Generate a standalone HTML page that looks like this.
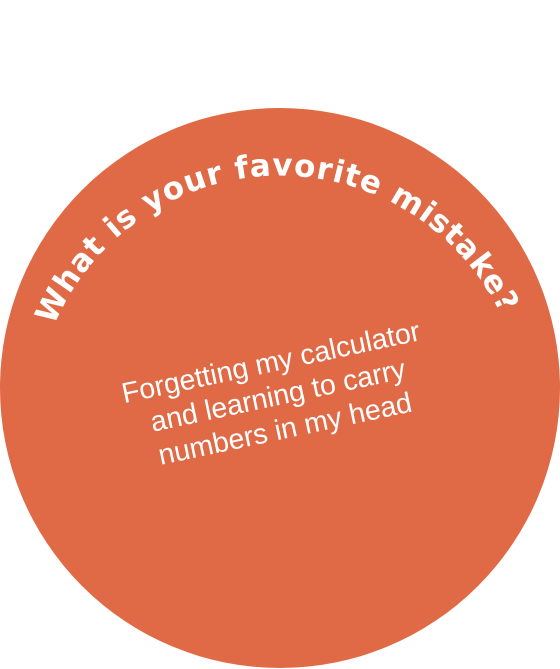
<!DOCTYPE html>
<html><head><style>
html,body{margin:0;padding:0;background:#fff;width:560px;height:669px;overflow:hidden}
.c{position:absolute;left:0;top:108px;width:560px;height:560px;border-radius:50%;background:#E06A45}
.t{position:absolute;left:68px;top:345px;width:420px;text-align:center;color:#fff;font-family:"Liberation Sans",sans-serif;font-size:28.5px;line-height:34px;transform:rotate(-12deg);transform-origin:50% 50%}
svg{position:absolute;left:0;top:0}
</style></head><body>
<div class="c"></div>
<svg width="560" height="669">
<path id="a" d="M 54 326 A 245 245 0 0 1 506 326" fill="none"/>
<text font-family="'DejaVu Sans',sans-serif" font-weight="600" font-size="31" fill="#fff" letter-spacing="4"><textPath href="#a" textLength="566" lengthAdjust="spacing">What is your favorite mistake?</textPath></text>
</svg>
<div class="t">Forgetting my calculator<br>and learning to carry<br>numbers in my head</div>
</body></html>
